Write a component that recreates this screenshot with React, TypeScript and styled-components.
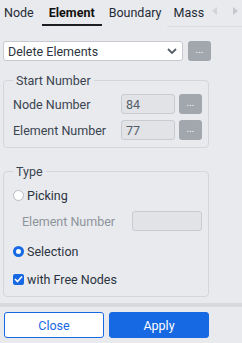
import React from "react";
import styled, { createGlobalStyle } from "styled-components";

const Global = createGlobalStyle`
  html, body { margin: 0; padding: 0; background: #e9eaee; }
  body { font-family: Roboto, "Noto Sans", sans-serif; font-size: 12.5px; color: #2b3440; }
  * { box-sizing: border-box; }
`;

const Page = styled.div`
  width: 242px;
  height: 343px;
  display: flex;
  flex-direction: column;
  background: #e9eaee;
  overflow: hidden;
`;

const TabBar = styled.div`
  display: flex;
  align-items: stretch;
  height: 27px;
  flex-shrink: 0;
`;

const Tab = styled.div<{ $active?: boolean; $pl: number; $pr: number; $line?: boolean }>`
  position: relative;
  padding: 0 ${(p) => p.$pr}px 2px ${(p) => p.$pl}px;
  display: flex;
  align-items: center;
  font-size: 12.5px;
  font-weight: ${(p) => (p.$active ? 700 : 400)};
  color: ${(p) => (p.$active ? "#111" : "#1f2a36")};
  border-bottom: 1px solid ${(p) => (p.$line ? "#dcdee2" : "transparent")};
  white-space: nowrap;
  ${(p) =>
    p.$active &&
    `&::after { content: ""; position: absolute; left: 0; right: 0; bottom: 0; height: 2px; background: #1b1f24; }`}
`;

const Arrows = styled.div`
  flex: 1;
  display: flex;
  align-items: center;
  justify-content: flex-end;
  gap: 14px;
  padding-right: 4px;
  padding-bottom: 4px;
  border-bottom: 1px solid #dcdee2;
`;

const Body = styled.div`
  display: flex;
  flex-direction: column;
  padding: 14px 31px 0 3px;
  flex-shrink: 0;
`;

const SelectRow = styled.div`
  display: flex;
  gap: 5px;
  height: 20px;
`;

const Select = styled.div`
  flex: 1;
  background: #fff;
  border: 1px solid #c7cad0;
  border-radius: 3px;
  display: flex;
  align-items: center;
  padding: 0 5px 0 4px;
  font-size: 12.5px;
  color: #2b3440;
  justify-content: space-between;
`;

const DotsButton = styled.div<{ $h?: number }>`
  width: 23px;
  height: ${(p) => p.$h ?? 20}px;
  background: #a2a6ad;
  border-radius: 3px;
  color: #fff;
  display: flex;
  align-items: center;
  justify-content: center;
  font-size: 10px;
  padding-bottom: 3px;
  flex-shrink: 0;
`;

const Fieldset = styled.fieldset<{ $mt: number; $pb: number }>`
  margin: ${(p) => p.$mt}px 2px 0 0;
  border: 1px solid #d4d6db;
  border-radius: 4px;
  padding: 4px 6px ${(p) => p.$pb}px 9px;
  display: flex;
  flex-direction: column;
  min-width: 0;
`;

const Legend = styled.legend`
  padding: 0 3px;
  margin-left: 0;
  font-size: 12.5px;
  color: #3a4450;
`;

const Row = styled.div<{ $indent?: number; $mt: number }>`
  display: flex;
  align-items: center;
  height: 20px;
  margin-top: ${(p) => p.$mt}px;
  padding-left: ${(p) => p.$indent ?? 0}px;
`;

const Label = styled.span<{ $disabled?: boolean; $w?: number }>`
  font-size: 12.5px;
  color: ${(p) => (p.$disabled ? "#8e949c" : "#3a4450")};
  width: ${(p) => p.$w ?? 108}px;
  flex-shrink: 0;
`;

const NumInput = styled.div<{ $w: number; $mr?: number }>`
  width: ${(p) => p.$w}px;
  height: 20px;
  border: 1px solid #c8cbd0;
  border-radius: 3px;
  background: #e1e3e7;
  font-size: 12.5px;
  color: #555d67;
  display: flex;
  align-items: center;
  padding: 0 4px 0 4px;
  margin-right: ${(p) => p.$mr ?? 4}px;
  flex-shrink: 0;
`;

const Option = styled.label<{ $mt: number }>`
  display: flex;
  align-items: center;
  gap: 3px;
  margin-top: ${(p) => p.$mt}px;
  font-size: 12.5px;
  color: #2b3440;
  height: 16px;
`;

const Radio = styled.span<{ $on?: boolean }>`
  width: 11px;
  height: 11px;
  border-radius: 50%;
  background: #fff;
  border: ${(p) => (p.$on ? "3px solid #1668e3" : "1px solid #b9bdc4")};
  flex-shrink: 0;
`;

const Check = styled.span`
  width: 11px;
  height: 11px;
  border-radius: 2px;
  background: #1668e3;
  display: flex;
  align-items: center;
  justify-content: center;
  flex-shrink: 0;
`;

const Divider = styled.div`
  height: 4px;
  background: #d7d9dd;
  margin-top: 6px;
  flex-shrink: 0;
`;

const Footer = styled.div`
  display: flex;
  gap: 5px;
  padding: 5px 33px 5px 4px;
  flex-shrink: 0;
`;

const Btn = styled.div<{ $primary?: boolean }>`
  flex: 1;
  height: 26px;
  border-radius: 3px;
  display: flex;
  align-items: center;
  justify-content: center;
  font-size: 12.5px;
  background: ${(p) => (p.$primary ? "#1668e3" : "#fff")};
  color: ${(p) => (p.$primary ? "#fff" : "#1668e3")};
  border: 1px solid #1668e3;
`;

export default function App() {
  return (
    <Page>
      <Global />
      <TabBar>
        <Tab $pl={4} $pr={8}>Node</Tab>
        <Tab $active $pl={7} $pr={7}>Element</Tab>
        <Tab $pl={7} $pr={6}>Boundary</Tab>
        <Tab $pl={6} $pr={0} $line>Mass</Tab>
        <Arrows>
          <svg width="6" height="8" viewBox="0 0 6 8"><path d="M5 0 L0 4 L5 8 Z" fill="#d2d4d8" /></svg>
          <svg width="6" height="8" viewBox="0 0 6 8"><path d="M1 0 L6 4 L1 8 Z" fill="#c4c7cc" /></svg>
        </Arrows>
      </TabBar>
      <Body>
        <SelectRow>
          <Select>
            <span>Delete Elements</span>
            <svg width="10" height="6" viewBox="0 0 10 6"><path d="M1 1 L5 5 L9 1" stroke="#555d67" strokeWidth="1.8" fill="none" /></svg>
          </Select>
          <DotsButton>...</DotsButton>
        </SelectRow>
        <Fieldset $mt={12} $pb={7}>
          <Legend>Start Number</Legend>
          <Row $mt={2}>
            <Label>Node Number</Label>
            <NumInput $w={54}>84</NumInput>
            <DotsButton $h={20}>...</DotsButton>
          </Row>
          <Row $mt={6}>
            <Label>Element Number</Label>
            <NumInput $w={54}>77</NumInput>
            <DotsButton $h={20}>...</DotsButton>
          </Row>
        </Fieldset>
        <Fieldset $mt={16} $pb={9}>
          <Legend>Type</Legend>
          <Option $mt={4}>
            <Radio />
            Picking
          </Option>
          <Row $indent={9} $mt={8}>
            <Label $disabled $w={110}>Element Number</Label>
            <NumInput $w={70} $mr={0} />
          </Row>
          <Option $mt={12}>
            <Radio $on />
            Selection
          </Option>
          <Option $mt={12}>
            <Check>
              <svg width="9" height="8" viewBox="0 0 9 8"><path d="M1 4 L3.5 6.5 L8 1.5" stroke="#fff" strokeWidth="1.6" fill="none" /></svg>
            </Check>
            with Free Nodes
          </Option>
        </Fieldset>
      </Body>
      <Divider />
      <Footer>
        <Btn>Close</Btn>
        <Btn $primary>Apply</Btn>
      </Footer>
    </Page>
  );
}
